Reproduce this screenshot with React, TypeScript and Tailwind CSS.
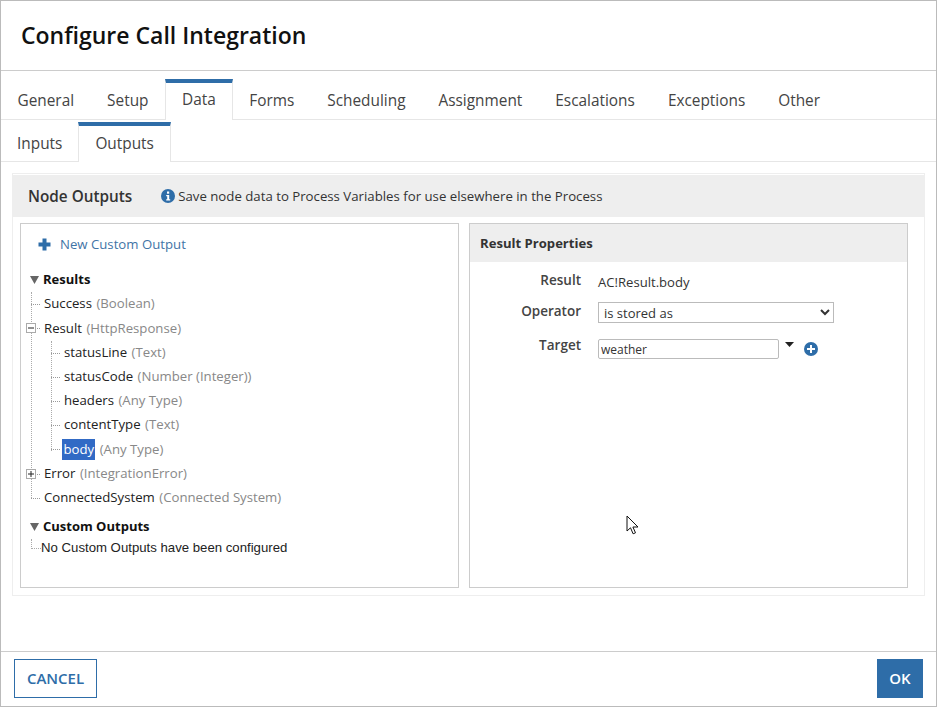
const tabs = ["General", "Setup", "Data", "Forms", "Scheduling", "Assignment", "Escalations", "Exceptions", "Other"];

function Row({ name, type, indent, selected, box }: { name: string; type: string; indent: number; selected?: boolean; box?: "plus" | "minus" }) {
  return (
    <div className="relative flex items-center h-[24.2px] text-[13.2px] whitespace-nowrap" style={{ paddingLeft: indent }}>
      <span className="absolute border-t border-dotted border-[#999] top-1/2 w-[9px]" style={{ left: indent - 13 }} />
      {box && (
        <svg className="absolute top-[7px] left-[5px] bg-white" width="10" height="10" viewBox="0 0 10 10">
          <rect x="0.5" y="0.5" width="9" height="9" fill="#fff" stroke="#aaa" />
          <path d={box === "plus" ? "M2 5h6M5 2v6" : "M2 5h6"} stroke="#222" fill="none" />
        </svg>
      )}
      <span className={selected ? "bg-[#316ac5] text-white pl-[1.5px] pr-[1px] -ml-[2px] leading-[21px]" : "text-[#222]"}>{name}</span>
      <span className="ml-[4.5px] text-[#888]">{type}</span>
    </div>
  );
}

export default function App() {
  return (
    <div className="w-[937px] h-[707px] flex flex-col bg-white border border-[#bbb] font-['Open_Sans',sans-serif] overflow-hidden">
      <div className="h-[70px] shrink-0 border-b border-[#ccc] flex items-center pl-[20px]">
        <h1 className="text-[23px] font-semibold text-[#111]">Configure Call Integration</h1>
      </div>
      <div className="h-[49px] shrink-0 flex items-end border-b border-[#e6e6e6] text-[15.38px] text-[#444]">
        {tabs.map((t) => (
          <div key={t} className={t === "Data" ? "h-[41px] -mb-[1px] bg-white px-[16px] border-t-[4px] border-t-[#2e6da8] border-x border-x-[#e6e6e6] flex items-center pb-[3px]" : "h-[40px] px-[16.5px] flex items-center pt-[3px]"}>
            {t}
          </div>
        ))}
      </div>
      <div className="h-[42px] shrink-0 flex items-end border-b border-[#e6e6e6] text-[15.38px] text-[#444]">
        <div className="h-[35px] px-[16px] flex items-center">Inputs</div>
        <div className="h-[40px] -mb-[1px] bg-white px-[16px] border-t-[4px] border-t-[#2e6da8] border-x border-x-[#e6e6e6] flex items-center pb-[1px]">Outputs</div>
      </div>
      <div className="mx-[11px] mt-[11px] h-[423px] shrink-0 border border-[#eee] flex flex-col">
        <div className="h-[42px] mt-[1px] shrink-0 bg-[#eee] flex items-center pl-[15px] text-[#333]">
          <span className="text-[15.3px] font-semibold">Node Outputs</span>
          <svg className="ml-[29px]" width="14" height="14" viewBox="0 0 14 14">
            <circle cx="7" cy="7" r="7" fill="#2e6da8" />
            <rect x="6" y="2.5" width="2.2" height="2.2" fill="#fff" />
            <path d="M5.2 6h3v4.2h1v1.2H5.2v-1.2h1V7.2h-1z" fill="#fff" />
          </svg>
          <span className="ml-[3px] mt-[1px] text-[13.22px]">Save node data to Process Variables for use elsewhere in the Process</span>
        </div>
        <div className="flex gap-[10px] pl-[7px] pt-[6px]">
          <div className="w-[439px] h-[365px] border border-[#ccc] relative">
            <div className="flex items-center pl-[17px] h-[41px] text-[13.2px] text-[#3f74a6] gap-[9px]">
              <svg width="13" height="13" viewBox="0 0 13 13"><path d="M4.5 0.5h4v4h4v4h-4v4h-4v-4h-4v-4h4z" fill="#2e6da8" /></svg>
              <span>New Custom Output</span>
            </div>
            <div className="relative flex items-center h-[24px] pl-[9px] text-[13px] font-bold text-[#111] mt-[3px]">
              <svg className="mr-[4px]" width="9" height="8" viewBox="0 0 9 8"><path d="M0 0h9L4.5 8z" fill="#666" /></svg>
              Results
            </div>
            <div className="relative pt-[0.2px]">
              <span className="absolute left-[10px] top-0 h-[206px] border-l border-dotted border-[#aaa]" />
              <span className="absolute left-[30px] top-[49px] h-[110px] border-l border-dotted border-[#aaa]" />
              <Row name="Success" type="(Boolean)" indent={23} />
              <Row name="Result" type="(HttpResponse)" indent={23} box="minus" />
              <Row name="statusLine" type="(Text)" indent={43} />
              <Row name="statusCode" type="(Number (Integer))" indent={43} />
              <Row name="headers" type="(Any Type)" indent={43} />
              <Row name="contentType" type="(Text)" indent={43} />
              <Row name="body" type="(Any Type)" indent={43} selected />
              <Row name="Error" type="(IntegrationError)" indent={23} box="plus" />
              <Row name="ConnectedSystem" type="(Connected System)" indent={23} />
            </div>
            <div className="flex items-center h-[24px] pl-[9px] mt-[5px] text-[13px] font-bold text-[#111]">
              <svg className="mr-[4px]" width="9" height="8" viewBox="0 0 9 8"><path d="M0 0h9L4.5 8z" fill="#666" /></svg>
              Custom Outputs
            </div>
            <div className="relative h-[18px] flex items-center pl-[20px] text-[13.2px] text-[#222] font-['Liberation_Sans',sans-serif] whitespace-nowrap">
              <span className="absolute left-[10px] top-0 h-[10px] w-[10px] border-l border-b border-dotted border-[#aaa]" />
              No Custom Outputs have been configured
            </div>
          </div>
          <div className="w-[439px] h-[365px] border border-[#ccc]">
            <div className="h-[38px] bg-[#eee] flex items-center pl-[10px] pt-[1px] text-[13.1px] font-bold text-[#333]">Result Properties</div>
            <div className="grid grid-cols-[111px_1fr] gap-x-[17px] text-[13px] pt-[9px] items-start">
              <div className="text-right text-[13.5px] font-semibold text-[#444] h-[22px] leading-[18px]">Result</div>
              <div className="text-[#333] h-[22px] leading-[22px] text-[13.1px]">AC!Result.body</div>
              <div className="text-right text-[13.5px] font-semibold text-[#444] mt-[7px] leading-[22px]">Operator</div>
              <div className="mt-[9px]">
                <select className="w-[236px] h-[21px] border border-[#bbb] bg-white text-[#333] text-[13px] pl-[1px] block">
                  <option>is stored as</option>
                </select>
              </div>
              <div className="text-right text-[13.5px] font-semibold text-[#444] mt-[11px] leading-[22px]">Target</div>
              <div className="mt-[16px] flex items-center">
                <input readOnly value="weather" className="w-[181px] h-[20px] border border-[#bbb] rounded-[2px] pl-[2px] text-[12px] text-[#333]" />
                <svg className="ml-[6px] mb-[10px]" width="9" height="5" viewBox="0 0 9 5"><path d="M0 0h9L4.5 5z" fill="#222" /></svg>
                <svg className="ml-[10px]" width="14" height="14" viewBox="0 0 14 14">
                  <circle cx="7" cy="7" r="7" fill="#2e6da8" />
                  <path d="M6 3h2v3h3v2H8v3H6V8H3V6h3z" fill="#fff" />
                </svg>
              </div>
            </div>
          </div>
        </div>
      </div>
      <div className="flex-1" />
      <div className="h-[55px] shrink-0 border-t border-[#ccc] flex items-start justify-between px-[13px] pt-[7px]">
        <button className="w-[83px] h-[39px] border border-[#2e6da8] text-[#2e6da8] text-[15px] font-semibold">CANCEL</button>
        <button className="w-[46px] h-[39px] bg-[#2e6da8] text-white text-[15px] font-semibold">OK</button>
      </div>
      <svg className="absolute left-[626px] top-[515px]" width="13" height="20" viewBox="0 0 13 20">
        <path d="M1 1v15l3.5-3.2 2.6 6 2.4-1-2.6-5.8H12z" fill="#fff" stroke="#111" />
      </svg>
    </div>
  );
}
